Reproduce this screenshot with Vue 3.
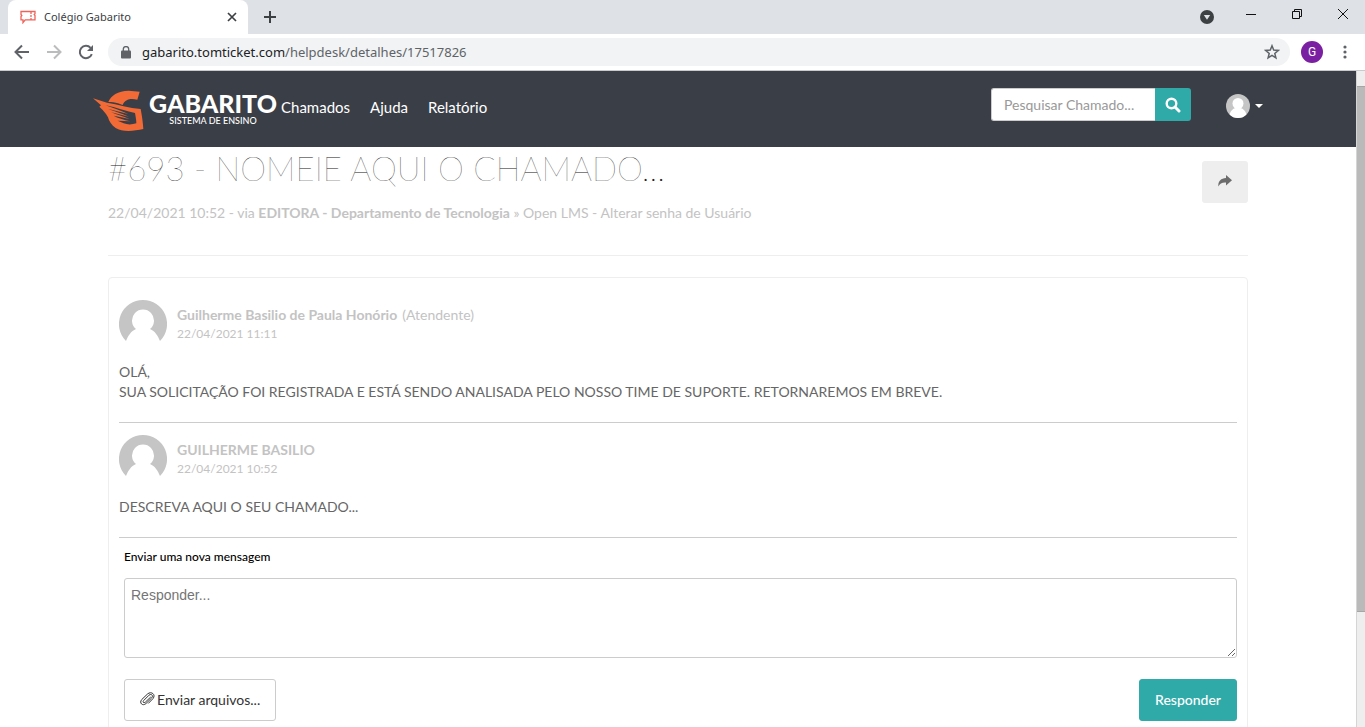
<script setup>
import { ref } from 'vue'

const address = ref('gabarito.tomticket.com/helpdesk/detalhes/17517826')
const host = address.value.split('/')[0]
const path = address.value.slice(host.length)
const search = ref('')
const reply = ref('')

const nav = ['Chamados', 'Ajuda', 'Relatório']

const messages = [
  {
    author: 'Guilherme Basilio de Paula Honório',
    role: '(Atendente)',
    date: '22/04/2021 11:11',
    lines: [
      'OLÁ,',
      'SUA SOLICITAÇÃO FOI REGISTRADA E ESTÁ SENDO ANALISADA PELO NOSSO TIME DE SUPORTE. RETORNAREMOS EM BREVE.',
    ],
  },
  {
    author: 'GUILHERME BASILIO',
    role: '',
    date: '22/04/2021 10:52',
    lines: ['DESCREVA AQUI O SEU CHAMADO...'],
  },
]
</script>

<template>
  <div class="browser">
    <div class="tabstrip">
      <div class="tab">
        <svg class="favicon" width="16" height="14" viewBox="0 0 16 14" fill="none" stroke="#f0635a" stroke-width="1.3">
          <path d="M1 1.5h14v2.2l-.8.8.8 1v4.3H5.2L3 12.6V9.800H1V6.500l.8-1-.8-1z" />
          <path d="M11 2v8" stroke-dasharray="2 1" />
        </svg>
        <span class="tab-title">Colégio Gabarito</span>
        <button class="icon-btn tab-close" aria-label="Fechar guia">
          <svg width="10" height="10" viewBox="0 0 10 10" stroke="#3c4043" stroke-width="1.7"><path d="M1 1l8 8M9 1L1 9" /></svg>
        </button>
      </div>
      <button class="icon-btn new-tab" aria-label="Nova guia">
        <svg width="14" height="14" viewBox="0 0 14 14" stroke="#3c4043" stroke-width="2"><path d="M7 1v12M1 7h12" /></svg>
      </button>
      <div class="window-controls">
        <button class="icon-btn tab-search" aria-label="Pesquisar guias">
          <svg width="14" height="14" viewBox="0 0 14 14"><circle cx="7" cy="7" r="7" fill="#3c4043" /><path d="M3.800 5h6.400L7 9.800z" fill="#dee1e6" /></svg>
        </button>
        <button class="icon-btn control" aria-label="Minimizar">
          <svg width="10" height="10" viewBox="0 0 10 10" stroke="#111"><path d="M0 5.500h10" /></svg>
        </button>
        <button class="icon-btn control" aria-label="Restaurar">
          <svg width="10" height="10" viewBox="0 0 10 10" stroke="#111" fill="none"><path d="M.5 2.500h7v7h-7zM2.500 2.500v-2h7v7h-2" /></svg>
        </button>
        <button class="icon-btn control" aria-label="Fechar">
          <svg width="10" height="10" viewBox="0 0 10 10" stroke="#111"><path d="M0 0l10 10M10 0L0 10" /></svg>
        </button>
      </div>
    </div>

    <div class="toolbar">
      <button class="icon-btn" aria-label="Voltar">
        <svg width="16" height="16" viewBox="0 0 16 16" fill="none" stroke="#5f6368" stroke-width="2"><path d="M15 8H2M8 1.500L1.500 8 8 14.500" /></svg>
      </button>
      <button class="icon-btn" aria-label="Avançar">
        <svg width="16" height="16" viewBox="0 0 16 16" fill="none" stroke="#babcbe" stroke-width="2"><path d="M1 8h13M8 1.500L14.500 8 8 14.500" /></svg>
      </button>
      <button class="icon-btn" aria-label="Recarregar">
        <svg width="16" height="16" viewBox="0 0 16 16" fill="none" stroke="#5f6368" stroke-width="2"><path d="M13.800 10.200A6.200 6.200 0 1 1 12.600 3.800" /><path d="M15 1v6H9z" fill="#5f6368" stroke="none" /></svg>
      </button>
      <div class="omnibox">
        <svg width="10" height="13" viewBox="0 0 10 13"><rect x="0" y="4.500" width="10" height="8" rx="1" fill="#5f6368" /><path d="M2.300 5V3.300a2.700 2.700 0 0 1 5.400 0V5" fill="none" stroke="#5f6368" stroke-width="1.300" /></svg>
        <span class="url"><span class="host">{{ host }}</span>{{ path }}</span>
        <button class="icon-btn" aria-label="Favoritar">
          <svg width="16" height="16" viewBox="0 0 16 16" fill="none" stroke="#5f6368" stroke-width="1.500"><path d="M8 1.800l1.700 4.300 4.600.3-3.500 3 1.100 4.500L8 11.400l-3.900 2.500 1.100-4.500-3.500-3 4.600-.3z" /></svg>
        </button>
      </div>
      <button class="icon-btn profile" aria-label="Perfil">G</button>
      <button class="icon-btn more" aria-label="Menu">
        <svg width="4" height="14" viewBox="0 0 4 14" fill="#5f6368"><circle cx="2" cy="2" r="1.600" /><circle cx="2" cy="7" r="1.600" /><circle cx="2" cy="12" r="1.600" /></svg>
      </button>
    </div>

    <div class="viewport">
      <div class="page">
        <header class="site-header">
          <div class="header-inner">
            <a class="logo" href="#">
              <svg width="52" height="42" viewBox="38 54 156 126">
                <path fill="#f26a35" d="M84 90C92 70 112 57 145 56L178 59 171 83C150 78 134 82 127 99L113 94C104 91 94 90 84 90Z" />
                <path fill="#f26a35" d="M38 79L80 92C112 97 147 108 181 111C185 132 188 152 189 171C160 178 124 180 106 168C94 160 86 148 83 136L77 126 67 114 57 104 62 100Z" />
                <path fill="#3a3e47" d="M76 100C108 106 136 118 164 123C166 135 168 144 168 154C156 158 142 159 130 154L112 146 150 148C130 143 112 138 100 131L148 141C126 133 106 127 93 121L146 134C122 124 98 116 84 111L144 126C120 116 98 108 76 100Z" />
              </svg>
              <span class="logo-text">
                <strong>GABARITO</strong>
                <small>SISTEMA DE ENSINO</small>
              </span>
            </a>
            <nav class="nav">
              <a v-for="item in nav" :key="item" href="#">{{ item }}</a>
            </nav>
            <form class="search" @submit.prevent>
              <input v-model="search" type="text" placeholder="Pesquisar Chamado..." aria-label="Pesquisar Chamado" />
              <button type="submit" aria-label="Pesquisar">
                <svg width="16" height="16" viewBox="0 0 16 16" fill="none" stroke="#fff"><circle cx="6.500" cy="6.500" r="4.800" stroke-width="2.400" /><path d="M10 10l4 4" stroke-width="3" stroke-linecap="round" /></svg>
              </button>
            </form>
            <button class="icon-btn user" aria-label="Conta">
              <svg width="24" height="24" viewBox="0 0 48 48"><clipPath id="user-clip"><circle cx="24" cy="24" r="24" /></clipPath><g clip-path="url(#user-clip)"><path fill="#c5c5c5" d="M0 0h48v48H0z" /><circle cx="24" cy="19" r="11" fill="#fff" /><path fill="#fff" d="M6 48C7 35 13 29 20 28h8c7 1 13 7 14 20z" /></g></svg>
              <svg width="8" height="4" viewBox="0 0 8 4" fill="#fff"><path d="M0 0h8L4 4z" /></svg>
            </button>
          </div>
        </header>

        <main class="container">
          <section class="ticket-head">
            <div>
              <h1>#693 - NOMEIE AQUI O CHAMADO...</h1>
              <p class="meta">22/04/2021 10:52 - via <b>EDITORA - Departamento de Tecnologia</b> » Open LMS - Alterar senha de Usuário</p>
            </div>
            <button class="share" aria-label="Compartilhar">
              <svg width="14" height="12" viewBox="0 0 14 12" fill="#6c6c6c"><path d="M8 0l6 5.200-6 5.200V7.400C4 7.200 1.800 8.200.4 11.500-.2 6.800 2.500 3.200 8 3z" /></svg>
            </button>
          </section>

          <section class="panel">
            <article v-for="m in messages" :key="m.date" class="message">
              <div class="who">
                <svg class="avatar" width="48" height="48" viewBox="0 0 48 48"><path fill="#c5c5c5" d="M24 0a24 24 0 0 1 17 41C39 36 36 31 31 29A11 11 0 1 0 17 29C12 31 9 36 7 41A24 24 0 0 1 24 0z" /></svg>
                <div class="who-text">
                  <div class="author"><b>{{ m.author }}</b><span v-if="m.role">{{ m.role }}</span></div>
                  <time>{{ m.date }}</time>
                </div>
              </div>
              <div class="body">
                <p v-for="line in m.lines" :key="line">{{ line }}</p>
              </div>
            </article>

            <form class="reply" @submit.prevent>
              <label for="reply">Enviar uma nova mensagem</label>
              <textarea id="reply" v-model="reply" placeholder="Responder..."></textarea>
              <div class="actions">
                <button type="button" class="attach">
                  <svg width="15" height="14" viewBox="0 0 15 14" fill="none" stroke="#333" stroke-width="1" stroke-linecap="round"><path d="M10.500 5.200L5.300 10.200c-1.600 1.300-3-.2-1.700-1.600L9 3.200c2.400-2 4.600.5 2.700 2.700l-5.800 5.700c-3.300 2.900-7-.7-4.200-4L7.500 2C11.300-1.300 16.200 2.600 13 6.600L8.500 11.200" /></svg>
                  <span>Enviar arquivos...</span>
                </button>
                <button type="submit" class="send">Responder</button>
              </div>
            </form>
          </section>
        </main>
      </div>
      <div class="scrollbar"><div class="thumb"></div></div>
    </div>
  </div>
</template>

<style>
body {
  overflow: hidden;
}
</style>

<style scoped>
* {
  box-sizing: border-box;
}
.browser {
  display: flex;
  flex-direction: column;
  height: 100vh;
  background: #fff;
  font-family: Lato, "Liberation Sans", sans-serif;
  font-size: 14px;
  line-height: 20px;
  color: #666;
}
h1,
p {
  margin: 0;
}
a {
  text-decoration: none;
}
svg {
  display: block;
  flex: none;
}
button {
  font-family: inherit;
  cursor: pointer;
}
.icon-btn {
  display: flex;
  align-items: center;
  justify-content: center;
  flex: none;
  padding: 0;
  border: 0;
  background: none;
}

.tabstrip {
  display: flex;
  flex: none;
  height: 34px;
  padding-left: 8px;
  background: #dee1e6;
  font-family: "Noto Sans", "Open Sans", sans-serif;
}
.tab {
  display: flex;
  align-items: center;
  width: 240px;
  padding: 0 11px 0 12px;
  border-radius: 8px 8px 0 0;
  background: #fff;
}
.tab-title {
  flex: 1;
  padding-left: 8px;
  font-size: 11px;
  color: #3c4043;
}
.new-tab {
  padding: 0 15px;
}
.window-controls {
  display: flex;
  gap: 36px;
  margin-left: auto;
  padding-right: 17px;
}
.window-controls .control {
  height: 28px;
}
.tab-search {
  margin-right: -4px;
}

.toolbar {
  display: flex;
  align-items: center;
  flex: none;
  gap: 16px;
  height: 37px;
  padding: 0 18px 0 14px;
  border-bottom: 1px solid #c8cace;
  font-family: "Noto Sans", "Open Sans", sans-serif;
}
.omnibox {
  display: flex;
  align-items: center;
  flex: 1;
  height: 28px;
  margin-left: -2px;
  padding: 0 10px 0 13px;
  border-radius: 14px;
  background: #f1f3f4;
}
.url {
  flex: 1;
  padding-left: 11px;
  font-size: 13px;
  color: #5f6368;
}
.host {
  color: #202124;
}
.profile {
  width: 22px;
  height: 22px;
  margin-left: -5px;
  border-radius: 50%;
  background: #7b1fa2;
  color: #fff;
  font-family: Roboto, sans-serif;
  font-size: 12px;
}
.more {
  margin-left: 4px;
}

.viewport {
  display: flex;
  flex: 1;
  min-height: 0;
}
.page {
  flex: 1;
  min-width: 0;
  overflow: hidden;
}
.scrollbar {
  flex: none;
  width: 9px;
  padding-top: 15px;
  border-left: 1px solid #d5d5d5;
  background: #eee;
}
.thumb {
  height: 82%;
  border: solid #a6a6a6;
  border-width: 1px 0;
  background: #bababa;
}

.site-header {
  height: 76px;
  background: #3a3e47;
}
.header-inner {
  display: flex;
  align-items: center;
  max-width: 1170px;
  height: 72px;
  margin: 0 auto;
}
.logo {
  display: flex;
  align-items: center;
  gap: 4px;
  width: 188px;
  padding-top: 8px;
  color: #fff;
}
.logo-text {
  display: flex;
  flex-direction: column;
  align-items: center;
}
.logo strong {
  font-size: 25px;
  line-height: 24px;
  font-weight: 900;
}
.logo small {
  font-size: 9px;
  line-height: 12px;
  font-weight: 500;
}
.logo-text {
  padding-bottom: 4px;
}
.nav {
  display: flex;
  gap: 20px;
  font-size: 15px;
}
.nav a {
  color: #fff;
}
.search {
  display: flex;
  width: 200px;
  height: 33px;
  margin-left: auto;
  margin-bottom: 5px;
}
.search input {
  flex: 1;
  min-width: 0;
  padding: 0 12px;
  border: 1px solid #ccc;
  border-right: 0;
  border-radius: 3px 0 0 3px;
  background: #fff;
  font: 14px/20px Lato, sans-serif;
}
.search input::placeholder {
  color: #999;
}
.search button {
  display: flex;
  align-items: center;
  justify-content: center;
  width: 36px;
  padding: 0;
  border: 0;
  border-radius: 0 3px 3px 0;
  background: #2faaa8;
}
.user {
  gap: 5px;
  margin-left: 35px;
  margin-bottom: 2px;
}

.container {
  max-width: 1170px;
  margin: 0 auto;
  padding: 0 15px;
}
.ticket-head {
  display: flex;
  justify-content: space-between;
  align-items: flex-start;
  height: 109px;
  border-bottom: 1px solid #eee;
}
h1 {
  font-size: 33px;
  line-height: 42px;
  font-weight: 100;
  color: #222;
}
.meta {
  margin-top: 14px;
  color: #c3c3c3;
}
.share {
  display: flex;
  align-items: center;
  justify-content: center;
  width: 46px;
  height: 42px;
  margin-top: 14px;
  padding-bottom: 3px;
  border: 0;
  border-radius: 3px;
  background: #eee;
}

.panel {
  margin-top: 21px;
  padding: 12px 10px 40px;
  border: 1px solid #eee;
  border-radius: 4px;
}
.message {
  padding: 10px 0 20px;
  border-bottom: 1px solid #ccc;
}
.message + .message {
  padding-top: 12px;
}
.who {
  display: flex;
  gap: 10px;
  color: #c3c3c3;
}
.who-text {
  padding-top: 5px;
}
.author {
  display: flex;
  gap: 5px;
}
time {
  display: block;
  font-size: 12px;
  line-height: 17px;
}
.body {
  margin-top: 14px;
}
.reply {
  padding: 9px 0 0 5px;
}
.reply label {
  display: block;
  font-size: 12px;
  font-weight: 500;
  color: #000;
}
textarea {
  display: block;
  width: 100%;
  height: 80px;
  margin-top: 11px;
  padding: 6px;
  border: 1px solid #ccc;
  border-radius: 3px;
  font: 14px/20px "Liberation Sans", sans-serif;
}
textarea::placeholder {
  color: #757575;
}
.actions {
  display: flex;
  justify-content: space-between;
  margin-top: 21px;
}
.actions button {
  display: flex;
  align-items: center;
  height: 42px;
  padding: 0 15px 2px;
  border: 1px solid #ccc;
  border-radius: 3px;
  font-size: 14px;
}
.attach {
  gap: 2px;
  background: #fff;
  color: #333;
}
.actions .send {
  border-color: #2faaa8;
  background: #2faaa8;
  color: #fff;
  font-weight: 500;
}
</style>
